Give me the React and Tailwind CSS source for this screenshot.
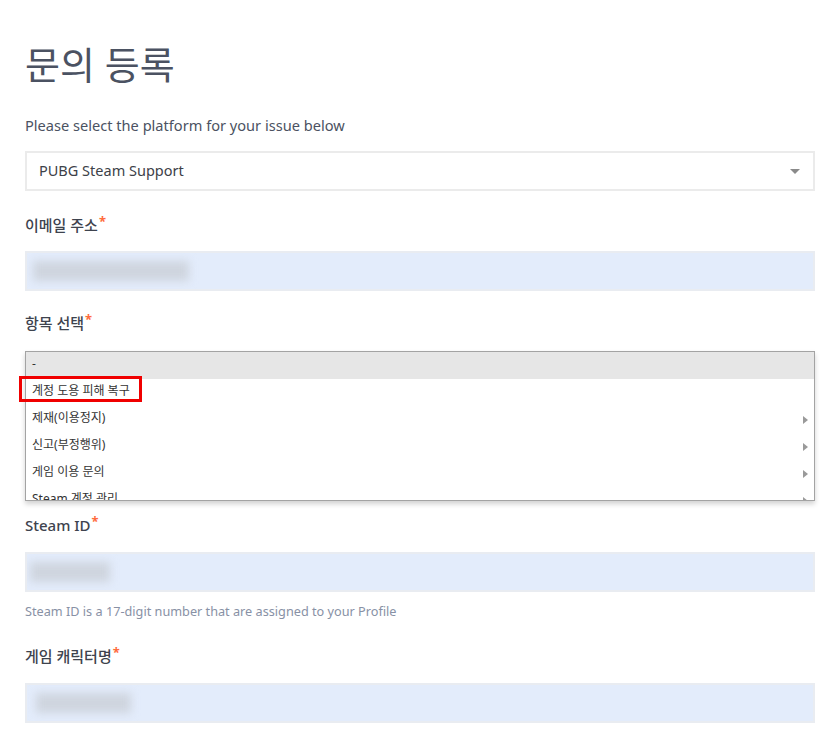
import React from 'react';

const font = { fontFamily: '"Noto Sans", "Noto Sans CJK KR", sans-serif' };

const options = [
  { label: '-', sub: false },
  { label: '계정 도용 피해 복구', sub: false },
  { label: '제재(이용정지)', sub: true },
  { label: '신고(부정행위)', sub: true },
  { label: '게임 이용 문의', sub: true },
  { label: 'Steam 계정 관리', sub: true },
];

const Label = ({ children }) => (
  <label className="block text-[15px] leading-[22px] font-medium text-[#3e434e]">
    {children}
    <span className="ml-[1px] align-top text-[13px] leading-[15px] font-bold text-[#ff6b3d]">*</span>
  </label>
);

// blurred personal data inside the prefilled inputs
const BlurInput = ({ left, width }) => (
  <div className="h-[40px] w-full border-2 border-[#e9ecf1] bg-[#e3ecfb] flex items-center overflow-hidden">
    <div
      className="h-[20px] bg-[#cfd5df] blur-[4px]"
      style={{ marginLeft: left, width }}
    />
  </div>
);

const App = () => {
  return (
    <div className="min-h-screen bg-white" style={font}>
      <div className="ml-[25px] w-[790px] pt-[38px]">
        <h1 className="text-[38px] leading-[52px] font-normal text-[#4b5262]">문의 등록</h1>

        <p className="mt-[24px] text-[14.6px] leading-[22px] text-[#4b5262]">
          Please select the platform for your issue below
        </p>

        {/* platform select */}
        <div className="mt-[15px] h-[40px] border-2 border-[#ebebeb] bg-white flex items-center justify-between pl-[12px] pr-[13px]">
          <span className="text-[14.5px] text-[#3d4148]">PUBG Steam Support</span>
          <span className="w-0 h-0 border-l-[5px] border-r-[5px] border-t-[5px] border-l-transparent border-r-transparent border-t-[#8a8a8a]" />
        </div>

        {/* email */}
        <div className="mt-[23px]">
          <Label>이메일 주소</Label>
          <div className="mt-[15px]">
            <BlurInput left={6} width={156} />
          </div>
        </div>

        {/* category */}
        <div className="mt-[21px]">
          <Label>항목 선택</Label>
          <div className="relative mt-[17px]">
            <div className="h-[150px] overflow-hidden border border-[#a3a3a3] bg-white shadow-[0_3px_5px_rgba(0,0,0,0.18)]">
              {options.map((o, i) => (
                <div
                  key={o.label}
                  className={`flex h-[27px] items-center justify-between pl-[6px] pr-[6px] text-[12px] text-[#333] ${i === 0 ? 'bg-[#e6e6e6]' : 'bg-white'}`}
                >
                  <span className="-mt-[3px]">{o.label}</span>
                  {o.sub && (
                    <span className="w-0 h-0 border-t-[4px] border-b-[4px] border-l-[5px] border-t-transparent border-b-transparent border-l-[#9a9a9a]" />
                  )}
                </div>
              ))}
            </div>
            {/* highlight annotation */}
            <div className="absolute left-[-6px] top-[25px] h-[26px] w-[123px] border-[3px] border-[#f00000]" />
          </div>
        </div>

        {/* steam id */}
        <div className="mt-[13px]">
          <Label>Steam ID</Label>
          <div className="mt-[16px]">
            <BlurInput left={3} width={80} />
          </div>
          <p className="mt-[9px] text-[12.7px] leading-[20px] text-[#8891a5]">
            Steam ID is a 17-digit number that are assigned to your Profile
          </p>
        </div>

        {/* character name */}
        <div className="mt-[24px]">
          <Label>게임 캐릭터명</Label>
          <div className="mt-[16px]">
            <BlurInput left={9} width={95} />
          </div>
        </div>
      </div>
    </div>
  );
};

export default App;
